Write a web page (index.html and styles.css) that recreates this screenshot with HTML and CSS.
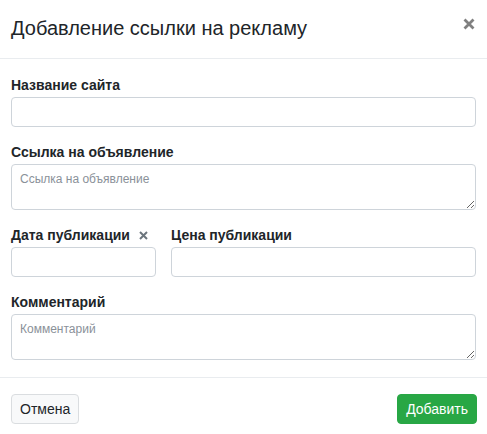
FILE: index.html
```html
<!DOCTYPE html>
<html lang="ru">
<head>
<meta charset="utf-8">
<link rel="stylesheet" href="styles.css">
</head>
<body>
<div class="modal">
  <div class="modal-header">
    <h5 class="modal-title">Добавление ссылки на рекламу</h5>
    <button class="close" type="button" aria-label="Закрыть">
      <svg width="12" height="12" viewBox="0 0 12 12"><path d="M1.5 1.5 L10.5 10.5 M10.5 1.5 L1.5 10.5" stroke="currentColor" stroke-width="2.8" stroke-linecap="butt"/></svg>
    </button>
  </div>
  <div class="modal-body">
    <div class="group">
      <label class="label">Название сайта</label>
      <input class="control" type="text">
    </div>
    <div class="group">
      <label class="label">Ссылка на объявление</label>
      <textarea class="control area" placeholder="Ссылка на объявление"></textarea>
    </div>
    <div class="row">
      <div class="group">
        <label class="label">Дата публикации <span class="clear"><svg width="9" height="9" viewBox="0 0 9 9"><path d="M1 1 L8 8 M8 1 L1 8" stroke="currentColor" stroke-width="2"/></svg></span></label>
        <input class="control" type="text">
      </div>
      <div class="group">
        <label class="label">Цена публикации</label>
        <input class="control" type="text">
      </div>
    </div>
    <div class="group last">
      <label class="label">Комментарий</label>
      <textarea class="control area" placeholder="Комментарий"></textarea>
    </div>
  </div>
  <div class="modal-footer">
    <button class="btn btn-light" type="button">Отмена</button>
    <button class="btn btn-success" type="button">Добавить</button>
  </div>
</div>
</body>
</html>
```
FILE: styles.css
```css
* { box-sizing: border-box; }
html, body { margin: 0; padding: 0; background: #fff; }
body {
  font-family: "Liberation Sans", Arial, sans-serif;
  color: #212529;
  font-size: 14px;
  line-height: 1.5;
}
.modal { width: 487px; }
.modal-header {
  display: flex;
  align-items: flex-start;
  justify-content: space-between;
  padding: 13px 12px 15px 11px;
  border-bottom: 1px solid #e9ecef;
}
.modal-title {
  margin: 0;
  font-size: 20px;
  font-weight: 400;
  line-height: 30px;
}
.close {
  border: 0;
  background: none;
  padding: 0;
  color: #808080;
  display: flex;
  margin-top: 5px;
}
.modal-body { padding: 16px 11px 17px 11px; }
.group { margin-bottom: 15px; }
.group.last { margin-bottom: 0; }
.label {
  display: flex;
  align-items: center;
  gap: 9px;
  font-weight: 700;
  font-size: 14px;
  line-height: 21px;
  margin-bottom: 1px;
}
.clear { color: #6c757d; display: flex; margin-top: -1px; }
.control {
  display: block;
  width: 100%;
  height: 30px;
  border: 1px solid #ced4da;
  border-radius: 4px;
  background: #fff;
  font-family: "Liberation Sans", Arial, sans-serif;
  font-size: 12px;
  padding: 4px 8px;
  margin: 0;
}
.area {
  height: 46px;
  padding: 6px 8px;
  line-height: 1.4;
  resize: vertical;
}
.area::placeholder { color: #8a9199; }
.row {
  display: grid;
  grid-template-columns: 145px 1fr;
  gap: 15px;
}
.modal-footer {
  display: flex;
  justify-content: space-between;
  align-items: center;
  padding: 16px 10px 10px 11px;
  border-top: 1px solid #e9ecef;
}
.btn {
  font-family: "Liberation Sans", Arial, sans-serif;
  font-size: 14px;
  line-height: 20px;
  height: 30px;
  padding: 4px 8px;
  border-radius: 4px;
  border: 1px solid transparent;
}
.btn-light {
  background: #f8f9fa;
  border-color: #dadde0;
  color: #212529;
}
.btn-success {
  background: #28a745;
  border-color: #28a745;
  color: #fff;
}
```
